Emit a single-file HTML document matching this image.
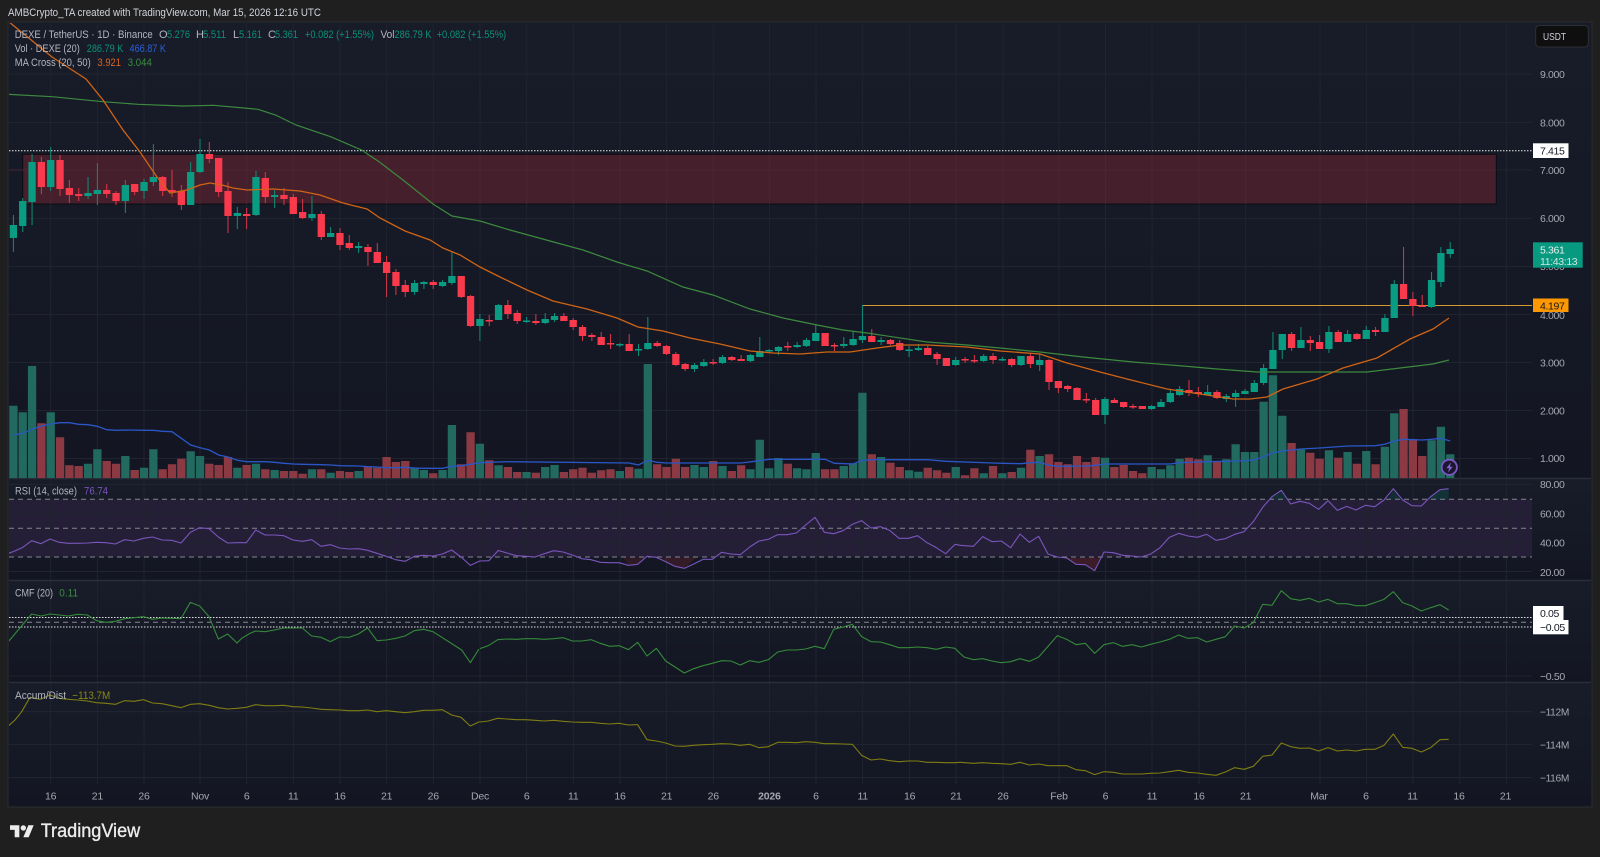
<!DOCTYPE html>
<html><head><meta charset="utf-8"><title>DEXE / TetherUS</title>
<style>
html,body{margin:0;padding:0;background:#1f1f1f;width:1600px;height:857px;overflow:hidden}
svg{display:block}
text{font-family:"Liberation Sans",sans-serif;font-size:11px}
.ax{font-size:10.5px;letter-spacing:-.35px;fill:#a5a8b0}
.t{font-size:10.5px;letter-spacing:-.2px;fill:#a5a8b0;text-anchor:middle}
.n{fill:none;vector-effect:non-scaling-stroke}
.n *{vector-effect:non-scaling-stroke}
.l{color:#b2b5be;fill:#b2b5be}
.g{fill:#0d8f79}
</style></head><body>
<svg width="1600" height="857" viewBox="0 0 1600 857" xmlns="http://www.w3.org/2000/svg">
<defs>
<linearGradient id="p" x1="0" y1="0" x2="0" y2="1"><stop offset="0" stop-color="#181c29"/><stop offset="1" stop-color="#131622"/></linearGradient>
<clipPath id="c"><rect x="9" y="23" width="1523" height="761"/></clipPath>
</defs>
<rect width="1600" height="857" fill="#1f1f1f"/>
<rect x="8" y="22" width="1584" height="785" fill="#131622" stroke="#2d2e31" stroke-width="1"/>
<rect x="9" y="23" width="1582" height="455" fill="url(#p)"/>
<rect x="9" y="479" width="1582" height="101" fill="url(#p)"/>
<rect x="9" y="581" width="1582" height="101" fill="url(#p)"/>
<rect x="9" y="683" width="1582" height="123" fill="url(#p)"/>
<!-- RSI band -->
<rect x="9" y="499.3" width="1523" height="57.7" fill="#241f36"/>
<!-- grid -->
<path d="M9 74H1532M9 122.5H1532M9 170H1532M9 218.5H1532M9 266.5H1532M9 314.5H1532M9 362.5H1532M9 410.5H1532M9 458.5H1532M9 484.5H1532M9 513.5H1532M9 542.5H1532M9 571.5H1532M9 676H1532M9 711.5H1532M9 744.5H1532M9 777.5H1532" stroke="#20242e" stroke-width="1" fill="none"/>
<path d="M50.7 23V784M97.4 23V784M144 23V784M200 23V784M246.7 23V784M293.3 23V784M340 23V784M386.6 23V784M433.3 23V784M480 23V784M526.7 23V784M573.3 23V784M620 23V784M666.6 23V784M713.3 23V784M769.4 23V784M816 23V784M862.7 23V784M909.6 23V784M956 23V784M1003 23V784M1059 23V784M1105.5 23V784M1152 23V784M1199 23V784M1245.6 23V784M1320 23V784M1366.6 23V784M1413 23V784M1459.8 23V784M1506.4 23V784" stroke="#20242e" stroke-width="1" fill="none"/>
<path d="M9 478.5H1591M9 580.5H1591M9 682.5H1591" stroke="#2a2e39" stroke-width="1.5" fill="none"/>
<!-- zone -->
<rect x="22.7" y="154.3" width="1473.6" height="49.7" fill="#45202c" stroke="#0a0c12" stroke-width="1"/>
<path d="M50.7 155V204M97.4 155V204M144 155V204M200 155V204M246.7 155V204M293.3 155V204M340 155V204M386.6 155V204M433.3 155V204M480 155V204M526.7 155V204M573.3 155V204M620 155V204M666.6 155V204M713.3 155V204M769.4 155V204M816 155V204M862.7 155V204M909.6 155V204M956 155V204M1003 155V204M1059 155V204M1105.5 155V204M1152 155V204M1199 155V204M1245.6 155V204M1320 155V204M1366.6 155V204M1413 155V204M1459.8 155V204M9 170H1496" stroke="#4b2632" stroke-width="1" fill="none"/>
<!-- 7.415 line, 4.197 line -->
<path d="M9 150.7H1532" stroke="#e8e8e8" stroke-width="1" stroke-dasharray="1.5 1.5" fill="none"/>
<path d="M862.5 305.5H1532" stroke="#d89a2e" stroke-width="1" fill="none"/>
<g clip-path="url(#c)">
<g transform="translate(13.4 0) scale(9.33 1)" fill="none">
<!-- volume green -->
<path class="n" stroke="#22695f" stroke-width="8.3" d="M0 405.7V478M1 412.3V478M2 366V478M4 412.3V478M8 463.7V478M9 449.3V478M12 456V478M14 467.7V478M15 449.3V478M19 451.3V478M20 456V478M24 467.7V478M26 463.7V478M28 470V478M32 469.3V478M34 472.7V478M37 471V478M43 467.7V478M44 470V478M46 470V478M47 425V478M50 443.7V478M52 465.3V478M55 472V478M57 467V478M58 465V478M65 471V478M67 468.7V478M68 364V478M73 465V478M74 467V478M76 466V478M79 469.3V478M80 439.7V478M81 468.3V478M82 458V478M84 468.3V478M85 469.3V478M86 453V478M89 466V478M90 463.3V478M91 392.7V478M93 457V478M96 470.3V478M97 471.7V478M101 467V478M104 473.3V478M106 473.3V478M108 467.7V478M110 456V478M117 457.7V478M122 467V478M123 469.3V478M124 465.3V478M125 458.7V478M128 455.3V478M130 459.3V478M131 444.3V478M132 452V478M133 452V478M134 401.7V478M135 375.3V478M136 415.7V478M138 449.3V478M141 450.3V478M143 452V478M145 451V478M147 446.7V478M148 413.3V478M152 440.3V478M153 426.7V478M154 454.3V478"/>
<!-- volume red -->
<path class="n" stroke="#8b3a43" stroke-width="8.3" d="M3 423.3V478M5 437.3V478M6 465.3V478M7 466V478M10 461V478M11 463.7V478M13 470V478M16 469.3V478M17 464.3V478M18 458.7V478M21 463.7V478M22 465V478M23 457V478M25 465V478M27 469.3V478M29 471V478M30 471V478M31 473.7V478M33 469.3V478M35 471V478M36 472V478M38 467V478M39 467.7V478M40 457V478M41 462V478M42 461V478M45 473.3V478M48 464.3V478M49 432.3V478M51 460.3V478M53 467V478M54 472V478M56 472.7V478M59 472V478M60 469.3V478M61 467.7V478M62 472.7V478M63 470.3V478M64 469.3V478M66 467V478M69 464.3V478M70 467V478M71 458.7V478M72 467V478M75 461V478M77 471V478M78 465.3V478M83 463.7V478M87 469.3V478M88 469.3V478M92 454.3V478M94 462.7V478M95 467V478M98 467.7V478M99 470.3V478M100 472.7V478M102 475.3V478M103 468.3V478M105 466V478M107 472V478M109 449.7V478M111 454.3V478M112 462V478M113 464.3V478M114 456V478M115 462V478M116 457V478M118 467V478M119 465V478M120 471V478M121 473.3V478M126 457.7V478M127 459.3V478M129 462V478M137 443V478M139 452.7V478M140 458.7V478M142 457.7V478M144 463.7V478M146 464.3V478M149 409V478M150 439.3V478M151 456V478"/>
<!-- vol MA -->
<polyline class="n" stroke="#2a56c6" stroke-width="1.3" points="0,435 1,433.3 2,429.3 3,426 4,424 5,422.7 6,422.7 7,424.3 8,424.7 9,426.3 10,429.7 11,430.3 12,430 14,430.3 15,430.3 16,431.3 17,431.7 18,438.3 19,445 20,447.7 21,450 22,455 23,457 24,460.3 25,461.7 27,461.7 28,462.3 29,463.3 30,464 31,464.3 33,464.7 34,465 35,465.7 37,466 38,466.7 39,467 40,467.7 41,467.7 42,467.3 43,468 44,468.3 46,468.3 47,466.3 48,465.7 49,464.3 50,462.7 51,462.3 52,462 53,461.7 66,463 67,465 68,460.3 69,462.3 70,463 78,463 80,460.7 81,459.3 87,459.3 88,463.3 90,464 91,460.3 92,459.7 98,459.7 100,461.3 105,463 106,463.3 108,463.7 109,462.7 110,462.3 111,465.3 112,466.3 115,466 116,465.3 117,464 124,464 125,462.7 128,461.7 131,461 132,460.7 133,460 134,456.7 135,452.7 136,451 137,450 138,449 140,448 143,446 146,445.7 147,444.3 148,441 149,439.3 150,439.7 151,440 152,439.3 153,438.3 154,441"/>
<!-- green wicks -->
<path class="n" stroke="#0d8f79" stroke-width="1" d="M0 215V252M1 198V232M2 154V225M4 147V191M8 177V199M9 163V205M12 180V213M14 179V199M15 144V186M19 162V205M20 139V173M24 207V229M26 171V216M28 190V208M32 196V221M34 227V237M37 242V253M43 280V295M44 281V289M46 280V287M47 251V285M50 314V341M52 304V320M55 317V323M57 313V324M58 313V322M65 343V347M67 344V356M68 317V350M73 363V372M74 359V367M76 355V364M79 354V362M80 337V357M81 349V352M82 346V355M84 342V348M85 338V347M86 324V341M89 337V348M90 331V346M91 305V343M93 337V345M96 346V357M97 344V351M101 357V366M104 354V362M106 357V361M108 356V366M110 354V371M117 397V424M122 405V410M123 399V407M124 390V403M125 386V396M128 385V395M130 394V402M131 390V407M132 389V394M133 380V392M134 364V385M135 332V369M136 334V359M138 327V348M141 326V353M143 330V342M145 326V339M147 314V332M148 280V318M152 272V308M153 247V287M154 242V258"/>
<!-- red wicks -->
<path class="n" stroke="#d8384a" stroke-width="1" d="M3 157V194M5 155V196M6 180V203M7 188V201M10 184V198M11 191V205M13 184V195M16 176V196M17 170V197M18 185V210M21 142V163M22 158V197M23 182V233M25 208V229M27 172V203M29 188V205M30 194V214M31 199V219M33 211V240M35 228V250M36 235V250M38 244V266M39 243V263M40 256V297M41 269V295M42 280V297M45 280V289M48 276V298M49 295V327M51 315V326M53 300V319M54 310V324M56 314V325M59 313V321M60 318V330M61 325V341M62 333V341M63 332V345M64 334V349M66 334V351M69 341V347M70 345V355M71 352V366M72 363V371M75 359V365M77 356V361M78 355V361M83 342V351M87 333V346M88 343V351M92 329V342M94 339V345M95 340V351M98 346V355M99 352V365M100 358V366M102 357V363M103 355V363M105 353V364M107 358V367M109 353V368M111 359V390M112 381V393M113 385V392M114 387V400M115 393V403M116 398V415M118 398V403M119 402V408M120 404V409M121 406V409M126 380V396M127 387V397M129 390V399M137 332V351M139 336V351M140 335V349M142 330V342M144 333V340M146 327V336M149 247V299M150 292V316M151 295V307"/>
<!-- green bodies -->
<path class="n" stroke="#0a9c82" stroke-width="7.3" d="M0 225V238M1 201V226M2 162V202M4 160V187M8 193V196M9 190V194M12 185V201M14 182V191M15 177V182M19 172V205M20 154V172M24 213V216M26 177V215M28 195V197M32 214V218M34 233V237M37 246V248M43 283V292M44 282V284M46 282V286M47 276V283M50 319V326M52 305V320M55 320.5V322M57 319V323M58 316V320M65 344V345.5M67 349V350.5M68 343V349M73 365V369M74 362V366M76 357V363M79 355V361M80 351V357M81 350V351.5M82 347V351M84 345V347M85 340V346M86 333V341M89 344V346M90 339V345M91 336V340M93 340V342M96 349.5V351M97 348V350M101 360V365M104 356V361M106 359V360.5M108 356V365M110 360V365M117 399V415M122 406V409M123 402V407M124 393V402M125 389V395M128 392V395M130 396V399M131 393V397M132 391V394M133 383V392M134 368V383M135 350V369M136 334V350M138 340V348M141 332V349M143 334V342M145 330V339M147 318V332M148 284V318M152 280V307M153 253V282M154 249V254"/>
<!-- red bodies -->
<path class="n" stroke="#f83a4c" stroke-width="7.3" d="M3 162V187M5 160V189M6 188V195M7 194V196M10 190V194M11 193V201M13 184V192M16 177V191M17 190V192M18 191V205M21 154V159M22 158V192M23 191V216M25 214V216M27 178V197M29 195V199M30 197V214M31 212V218M33 214V237M35 233V245M36 243V248M38 247V252M39 252V263M40 262V273M41 272V286M42 285V292M45 282V285M48 276V297M49 296V326M51 320V321.5M53 305V314M54 313V321M56 321V323M59 316V321M60 320V327M61 327V336M62 335V337M63 337V345M64 343V344.5M66 344V351M69 343V346M70 346V354M71 354V365M72 364V369M75 362V363.5M77 357V360M78 359V361M83 346V347.5M87 333V346M88 345V346.5M92 336V342M94 340V344M95 343V350M98 348V355M99 354V359M100 358V366M102 359V360.5M103 360V361.5M105 356V360M107 359V365M109 356V364M111 360V382M112 381V388M113 386V389M114 388V400M115 399V400.5M116 400V415M118 400V403M119 402V407M120 406V407.5M121 406V409M126 390V393M127 392V394M129 392V398M137 334V348M139 340V343M140 342V349M142 332V342M144 334V339M146 330V332M149 284V299M150 299V306M151 305.5V307"/>
</g>
<!-- MA lines -->
<polyline class="n" stroke="#3d8a3f" stroke-width="1.2" fill="none" points="8,94.3 52,96.7 103,101.7 138,104.3 182.5,106 213.5,105.3 258,109.3 275.5,115 296,125 330.6,136.7 361.6,150 379,161.7 403,180 433,204 452,216 480,221 510,230 550,241 583,250 617,262 647,271 683,287 713,295 750,309 783,318 817,325 843,330 867,333 927,342 967,345 1000,348 1040,352 1083,357 1133,362 1183,366 1217,369 1257,372 1300,372 1367,372 1400,368 1433,364 1449,360"/>
<polyline class="n" stroke="#cf6415" stroke-width="1.3" fill="none" points="10,22.7 52,57 86,79 103,100 123,130 140,152 157,177 170,193 187,190 200,185 210,183 222,185 233,188 247,190 273,189 300,191 320,195 343,203 367,209 380,218 405,231 430,240 443,248 460,255 480,267 500,277 527,290 553,301 587,309 617,318 638,327 663,331 690,338 720,344 750,351 773,353 800,354 827,352 850,352 877,348 900,345 927,345 967,347 1000,351 1040,354 1067,363 1100,372 1127,379 1167,389 1200,394 1233,399 1250,399 1267,397 1283,389 1317,379 1343,368 1377,358 1410,339 1433,329 1449,318"/>
<!-- RSI bands lines -->
<path d="M9 499.3H1532M9 528.3H1532M9 557H1532" stroke="#85868f" stroke-width="1" stroke-dasharray="5 4" fill="none"/>
<!-- CMF levels -->
<path d="M9 617.5H1532M9 627H1532" stroke="#e0e0e0" stroke-width="1" stroke-dasharray="1.5 1.5" fill="none"/>
<path d="M9 622.3H1532" stroke="#85868f" stroke-width="1" stroke-dasharray="5 4" fill="none"/>
<!-- RSI -->
<g transform="translate(480 480) scale(.33333)">
<polygon points="430,232 445,256 473,253 490,232" fill="#f23645" opacity=".12"/>
<polygon points="540,232 585,259 613,265 650,232" fill="#f23645" opacity=".14"/>
</g>
<g transform="translate(960 480) scale(.33333)">
<polygon points="320,234 348,253 376,254 404,272 420,232" fill="#f23645" opacity=".18"/>
<polygon points="925,58 936,50 964,31 985,58" fill="#089981" opacity=".15"/>
<polygon points="1285,58 1300,26 1320,58" fill="#089981" opacity=".15"/>
<polygon points="1405,58 1412,50 1440,29 1466,26 1466,58" fill="#089981" opacity=".18"/>
</g>
<g fill="none" stroke-linejoin="round">
<polyline class="n" stroke="#7a55bd" stroke-width="1.1" transform="translate(0 350) scale(.33333)" points="25,610 40,605 67,593 95,572 123,581 150,567 178,577 205,580 233,580 262,579 290,577 318,578 346,582 374,569 402,573 430,565 458,561 486,570 515,571 543,579 571,547 599,533 627,536 655,561 683,579 711,578 739,578 767,540 795,555 823,555 851,557 879,570 907,574 935,569 963,589 991,584 1019,594 1047,597 1075,596 1103,601 1131,610 1159,619 1187,629 1215,634 1243,619 1271,616 1299,618 1327,612 1355,600 1383,621 1411,646 1439,633 1467,632 1495,601"/>
<polyline class="n" stroke="#7a55bd" stroke-width="1.1" transform="translate(480 480) scale(.33333)" points="53,211 81,219 109,227 137,229 165,231 193,221 221,212 249,216 277,225 305,236 333,239 361,247 389,248 417,248 445,256 473,253 501,229 529,232 557,245 585,259 613,265 641,252 669,238 697,238 725,217 753,222 781,224 809,201 837,183 865,178 893,164 921,164 949,159 977,135 1005,112 1033,157 1061,161 1089,152 1117,133 1145,122 1173,144 1201,140 1229,151 1257,175 1285,175 1313,167 1341,188 1369,203 1397,221 1425,193 1440,196"/>
<polyline class="n" stroke="#7a55bd" stroke-width="1.1" transform="translate(960 480) scale(.33333)" points="0,196 40,199 68,170 96,185 124,183 152,203 180,162 208,187 236,169 264,222 292,231 320,234 348,253 376,254 404,272 432,216 460,218 488,226 516,228 544,231 572,222 600,203 628,172 656,160 684,168 712,172 740,163 768,181 796,176 824,163 852,155 880,125 908,82 936,50 964,31 992,72 1020,64 1048,70 1076,88 1104,62 1132,91 1160,79 1188,90 1216,76 1244,80 1272,60 1300,26 1328,60 1356,77 1384,78 1412,50 1440,29 1466,26"/>
<!-- CMF -->
<polyline class="n" stroke="#358a3a" stroke-width="1.1" transform="translate(0 350) scale(.33333)" points="25,875 95,792 123,798 150,792 178,795 205,798 233,793 262,795 290,812 318,817 346,814 374,806 402,803 430,800 458,808 486,804 515,805 543,806 571,757 599,768 627,800 655,867 683,852 711,879 725,865 750,850 767,843 795,845 823,840 851,834 879,834 907,834 935,858 963,862 991,875 1019,861 1047,862 1075,852 1103,834 1131,872 1159,870 1187,865 1215,858 1243,842 1271,838 1299,845 1335,868 1385,900 1411,938 1437,897"/>
<polyline class="n" stroke="#358a3a" stroke-width="1.1" transform="translate(480 480) scale(.33333)" points="0,506 25,497 53,479 81,477 109,478 137,476 165,476 193,478 221,476 249,473 277,483 305,483 333,479 361,490 389,499 417,497 445,509 473,487 501,528 529,505 557,543 585,561 613,579 641,566 669,557 697,550 725,542 753,543 781,555 809,542 837,547 865,539 893,516 921,510 949,510 977,507 1005,499 1033,506 1061,448 1089,441 1117,433 1145,470 1173,485 1201,486 1229,494 1257,503 1285,503 1313,501 1341,503 1369,508 1397,501 1425,505 1440,520"/>
<polyline class="n" stroke="#358a3a" stroke-width="1.1" transform="translate(960 480) scale(.33333)" points="0,520 12,531 40,539 68,536 96,543 124,548 152,545 180,536 208,544 236,531 264,499 292,467 320,478 348,494 376,490 404,520 432,494 460,488 488,499 516,494 544,501 572,493 600,486 628,478 656,465 684,475 712,473 740,486 768,478 796,470 824,438 852,444 880,428 908,373 936,376 964,332 992,356 1020,361 1048,355 1076,366 1104,358 1132,371 1160,371 1188,377 1216,377 1244,368 1272,358 1300,335 1328,368 1356,378 1384,393 1412,383 1440,374 1466,390"/>
<!-- A/D -->
<polyline class="n" stroke="#7f7d12" stroke-width="1.1" transform="translate(0 640) scale(.33333)" points="25,258 45,240 65,215 90,172 120,178 150,165 178,175 205,178 233,180 262,183 290,188 318,190 346,193 374,182 402,184 430,179 458,189 486,191 515,197 543,203 571,193 599,191 627,196 655,203 683,207 711,205 739,202 767,194 795,197 823,197 851,196 879,200 907,201 935,204 963,208 991,209 1019,210 1047,212 1075,212 1103,210 1131,215 1159,212 1187,215 1215,218 1243,215 1271,211 1299,211 1327,209 1355,225 1383,232 1411,258 1439,245"/>
<polyline class="n" stroke="#7f7d12" stroke-width="1.1" transform="translate(480 480) scale(.33333)" points="0,726 25,723 53,715 81,717 109,719 137,719 165,721 193,723 221,721 249,724 277,726 305,727 333,727 361,730 389,732 417,730 445,735 473,734 501,779 529,783 557,789 585,798 613,799 641,796 669,794 697,793 725,791 753,792 781,796 809,793 837,803 865,800 893,787 921,787 949,788 977,785 1005,787 1033,791 1061,791 1089,792 1117,793 1145,826 1173,840 1201,837 1229,842 1257,845 1285,843 1313,843 1341,847 1369,847 1397,848 1425,848 1440,847"/>
<polyline class="n" stroke="#7f7d12" stroke-width="1.1" transform="translate(960 480) scale(.33333)" points="0,847 40,850 68,848 96,850 124,851 152,853 180,847 208,855 236,852 264,857 292,857 320,857 348,869 376,872 404,884 432,875 460,877 488,882 516,882 544,882 572,880 600,879 628,875 656,871 684,877 712,879 740,883 768,886 796,876 824,863 852,868 880,859 908,829 936,825 964,789 992,800 1020,805 1048,804 1076,813 1104,803 1132,813 1160,810 1188,813 1216,808 1244,808 1272,796 1300,762 1328,802 1356,805 1384,816 1412,803 1440,779 1466,778"/>
</g>
</g>
<!-- top text -->
<text x="8" y="16" fill="#d1d4dc" textLength="313" lengthAdjust="spacingAndGlyphs">AMBCrypto_TA created with TradingView.com, Mar 15, 2026 12:16 UTC</text>
<!-- legend -->
<g>
<text class="l" x="14.7" y="38" textLength="138" lengthAdjust="spacingAndGlyphs">DEXE / TetherUS · 1D · Binance</text>
<text class="l" x="159" y="38">O</text><text class="g" x="167" y="38" textLength="23" lengthAdjust="spacingAndGlyphs">5.276</text>
<text class="l" x="196" y="38">H</text><text class="g" x="203" y="38" textLength="23" lengthAdjust="spacingAndGlyphs">5.511</text>
<text class="l" x="233" y="38">L</text><text class="g" x="239" y="38" textLength="23" lengthAdjust="spacingAndGlyphs">5.161</text>
<text class="l" x="268" y="38">C</text><text class="g" x="275" y="38" textLength="23" lengthAdjust="spacingAndGlyphs">5.361</text>
<text class="g" x="305" y="38" textLength="69" lengthAdjust="spacingAndGlyphs">+0.082 (+1.55%)</text>
<text class="l" x="380.5" y="38" textLength="14" lengthAdjust="spacingAndGlyphs">Vol</text>
<text class="g" x="394.5" y="38" textLength="37" lengthAdjust="spacingAndGlyphs">286.79 K</text>
<text class="g" x="436.6" y="38" textLength="69.5" lengthAdjust="spacingAndGlyphs">+0.082 (+1.55%)</text>
<text class="l" x="14.8" y="52" textLength="65" lengthAdjust="spacingAndGlyphs">Vol · DEXE (20)</text>
<text class="g" x="86.8" y="52" textLength="36.5" lengthAdjust="spacingAndGlyphs">286.79 K</text>
<text x="129.5" y="52" fill="#2a5fd8" textLength="36.5" lengthAdjust="spacingAndGlyphs">466.87 K</text>
<text class="l" x="14.8" y="66" textLength="76" lengthAdjust="spacingAndGlyphs">MA Cross (20, 50)</text>
<text x="97.5" y="66" fill="#d9651f" textLength="23.5" lengthAdjust="spacingAndGlyphs">3.921</text>
<text x="127.8" y="66" fill="#3a8d3e" textLength="24" lengthAdjust="spacingAndGlyphs">3.044</text>
<text class="l" x="15" y="494.5" textLength="62" lengthAdjust="spacingAndGlyphs">RSI (14, close)</text>
<text x="84" y="494.5" fill="#7a55bd" textLength="24" lengthAdjust="spacingAndGlyphs">76.74</text>
<text class="l" x="15" y="596.5" textLength="38" lengthAdjust="spacingAndGlyphs">CMF (20)</text>
<text x="59.3" y="596.5" fill="#3a8d3e" textLength="18.7" lengthAdjust="spacingAndGlyphs">0.11</text>
<text class="l" x="15" y="699" textLength="51" lengthAdjust="spacingAndGlyphs">Accum/Dist</text>
<text x="72.3" y="699" fill="#8a8814" textLength="38" lengthAdjust="spacingAndGlyphs">−113.7M</text>
</g>
<!-- right axis -->
<g class="ax">
<text class="ax" x="1540" y="78">9.000</text>
<text class="ax" x="1540" y="126.3">8.000</text>
<text class="ax" x="1540" y="174">7.000</text>
<text class="ax" x="1540" y="222">6.000</text>
<text class="ax" x="1540" y="270">5.000</text>
<text class="ax" x="1540" y="319">4.000</text>
<text class="ax" x="1540" y="366.3">3.000</text>
<text class="ax" x="1540" y="414.3">2.000</text>
<text class="ax" x="1540" y="462">1.000</text>
<text class="ax" x="1540" y="488">80.00</text>
<text class="ax" x="1540" y="517.3">60.00</text>
<text class="ax" x="1540" y="546.3">40.00</text>
<text class="ax" x="1540" y="576">20.00</text>
<text class="ax" x="1540" y="680">−0.50</text>
<text class="ax" x="1540" y="715.7" textLength="29" lengthAdjust="spacingAndGlyphs">−112M</text>
<text class="ax" x="1540" y="748.3" textLength="29" lengthAdjust="spacingAndGlyphs">−114M</text>
<text class="ax" x="1540" y="781.7" textLength="29" lengthAdjust="spacingAndGlyphs">−116M</text>
</g>
<!-- labels -->
<rect x="1533" y="143.3" width="35.5" height="14.7" fill="#fff"/>
<text x="1540" y="154.7" fill="#131722" style="font-size:10.5px;letter-spacing:-.35px">7.415</text>
<rect x="1533" y="242.3" width="49.7" height="25.4" fill="#089981"/>
<text x="1540" y="253.5" fill="#e8f0ee" style="font-size:10.5px;letter-spacing:-.35px">5.361</text>
<text x="1540" y="265" fill="#cfe5df" style="font-size:10.5px;letter-spacing:-.35px">11:43:13</text>
<rect x="1533" y="298.5" width="35.5" height="13.5" fill="#ff9800"/>
<text x="1540" y="309.5" fill="#131722" style="font-size:10.5px;letter-spacing:-.35px">4.197</text>
<rect x="1533" y="606" width="30.5" height="14" fill="#fff"/>
<text x="1540" y="617" fill="#131722" style="font-size:10.5px;letter-spacing:-.35px">0.05</text>
<rect x="1533" y="620" width="35.5" height="14.3" fill="#fff"/>
<text x="1540" y="631" fill="#131722" style="font-size:10.5px;letter-spacing:-.35px">−0.05</text>
<!-- USDT -->
<rect x="1535.7" y="25.5" width="52.6" height="21.5" rx="3.5" fill="#0f0f10" stroke="#2e2f33"/>
<text x="1543" y="40" fill="#d1d4dc" style="font-size:10.5px" textLength="23" lengthAdjust="spacingAndGlyphs">USDT</text>
<!-- bolt -->
<circle cx="1449.3" cy="467.3" r="7.6" fill="#1a1730" stroke="#7e57c2" stroke-width="1.8"/>
<path d="M1451 462.4L1446.4 468.1h2.7l-1 4.4 4.5-5.8h-2.7z" fill="#8a63cf"/>
<!-- time axis -->
<g>
<text class="t" x="50.7" y="799.5">16</text><text class="t" x="97.4" y="799.5">21</text><text class="t" x="144" y="799.5">26</text><text class="t" x="200" y="799.5">Nov</text><text class="t" x="246.7" y="799.5">6</text><text class="t" x="293.3" y="799.5">11</text><text class="t" x="340" y="799.5">16</text><text class="t" x="386.6" y="799.5">21</text><text class="t" x="433.3" y="799.5">26</text><text class="t" x="480" y="799.5">Dec</text><text class="t" x="526.7" y="799.5">6</text><text class="t" x="573.3" y="799.5">11</text><text class="t" x="620" y="799.5">16</text><text class="t" x="666.6" y="799.5">21</text><text class="t" x="713.3" y="799.5">26</text><text class="t" x="769.4" y="799.5" style="font-weight:bold">2026</text><text class="t" x="816" y="799.5">6</text><text class="t" x="862.7" y="799.5">11</text><text class="t" x="909.6" y="799.5">16</text><text class="t" x="956" y="799.5">21</text><text class="t" x="1003" y="799.5">26</text><text class="t" x="1059" y="799.5">Feb</text><text class="t" x="1105.5" y="799.5">6</text><text class="t" x="1152" y="799.5">11</text><text class="t" x="1199" y="799.5">16</text><text class="t" x="1245.6" y="799.5">21</text><text class="t" x="1319" y="799.5">Mar</text><text class="t" x="1366" y="799.5">6</text><text class="t" x="1412.5" y="799.5">11</text><text class="t" x="1459" y="799.5">16</text><text class="t" x="1505.5" y="799.5">21</text>
</g>
<!-- logo -->
<g transform="translate(10 822.6) scale(.667)" fill="#ececec">
<path d="M14 22H7V11H0V4h14v18zM28 22h-8l7.5-18h8L28 22z"/><circle cx="20" cy="8" r="4"/>
</g>
<text x="40.7" y="837" fill="#ececec" stroke="#ececec" stroke-width=".35" style="font-size:19px" textLength="99.5" lengthAdjust="spacingAndGlyphs">TradingView</text>
</svg>
</body></html>
